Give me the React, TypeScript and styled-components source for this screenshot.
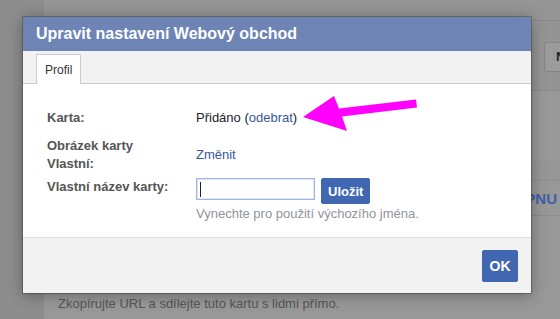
import React from "react";
import styled, { createGlobalStyle } from "styled-components";

const GlobalStyle = createGlobalStyle`
  html, body {
    margin: 0;
    padding: 0;
    width: 560px;
    height: 319px;
    overflow: hidden;
    font-family: "Liberation Sans", Arial, sans-serif;
  }
`;

/* page behind the dialog (already dimmed) */
const Page = styled.div`
  position: relative;
  display: flex;
  width: 560px;
  height: 319px;
  overflow: hidden;
  background: #999999;
`;

const Sidebar = styled.div`
  width: 44px;
  flex-shrink: 0;
  background: #8d8d8d;
`;

const Main = styled.div`
  flex: 1;
  min-width: 0;
  display: flex;
  flex-direction: column;
  overflow: hidden;
  background: #989898;
`;

const TopStrip = styled.div`
  height: 20px;
  background: #959595;
  border-bottom: 1px solid #888888;
`;

const Toolbar = styled.div`
  display: flex;
  height: 69px;
  padding-left: 500px;
  align-items: center;
  overflow: hidden;
  background: #949494;
  border-bottom: 1px solid #8a8a8a;
`;

const GhostButton = styled.div`
  flex-shrink: 0;
  width: 60px;
  height: 28px;
  margin-top: 2px;
  border: 1px solid #858585;
  border-radius: 3px;
  background: #9b9b9b;
  color: #222;
  font-size: 13px;
  font-weight: bold;
  line-height: 28px;
  padding-left: 11px;
`;

const Section = styled.div`
  height: 89px;
  border-bottom: 1px solid #8d8d8d;
  background: linear-gradient(#999999 0 70px, #969696 70px);
`;

const SectionTitle = styled.div`
  display: flex;
  justify-content: flex-end;
  height: 34px;
  align-items: center;
  padding-right: 3px;
  color: #3f60a8;
  font-size: 15px;
  font-weight: bold;
  white-space: nowrap;
  border-bottom: 1px solid #8d8d8d;
`;

const Filler = styled.div`
  flex: 1;
`;

const PageNote = styled.div`
  padding: 0 0 8px 14px;
  color: #555;
  font-size: 13px;
  white-space: nowrap;
`;

/* dialog */
const Dialog = styled.div`
  position: absolute;
  left: 23px;
  top: 17px;
  width: 508px;
  display: flex;
  flex-direction: column;
  background: #fff;
  box-shadow: 0 2px 14px rgba(0, 0, 0, 0.35), 0 0 0 1px rgba(70, 70, 70, 0.45);
`;

const Header = styled.div`
  height: 34px;
  background: #6d84b4;
  color: #fff;
  font-size: 16px;
  font-weight: bold;
  line-height: 34px;
  padding-left: 13px;
`;

const TabStrip = styled.div`
  display: flex;
  align-items: flex-end;
  height: 33px;
  padding-left: 13px;
  background: #f2f2f2;
  border-bottom: 1px solid #cccccc;
  box-sizing: border-box;
`;

const Tab = styled.div`
  height: 30px;
  margin-bottom: -1px;
  padding: 0 8px;
  background: #fff;
  border: 1px solid #cccccc;
  border-bottom: none;
  color: #333;
  font-size: 12px;
  line-height: 30px;
  box-sizing: border-box;
`;

const Body = styled.div`
  padding: 25px 24px 15px;
`;

const Row = styled.div<{ $after: number }>`
  display: grid;
  grid-template-columns: 149px 1fr;
  align-items: start;
  padding-bottom: ${(p) => p.$after}px;
`;

const Label = styled.div`
  color: #555;
  font-size: 13px;
  font-weight: bold;
  line-height: 18px;
`;

const Value = styled.div<{ $center?: boolean }>`
  align-self: ${(p) => (p.$center ? "center" : "start")};
  color: #1d2129;
  font-size: 13px;
  line-height: 18px;
`;

const Link = styled.a`
  color: #365899;
  text-decoration: none;
  cursor: pointer;
`;

const FieldColumn = styled.div`
  display: flex;
  flex-direction: column;
`;

const InputLine = styled.div`
  display: flex;
  align-items: flex-start;
  gap: 6px;
`;

const InputWrap = styled.div`
  position: relative;
  display: flex;
`;

const TextInput = styled.input`
  width: 119px;
  height: 22px;
  box-sizing: border-box;
  margin: 0;
  padding: 0 4px;
  border: 1px solid #9db4e4;
  outline: none;
  font-family: inherit;
  font-size: 13px;
  caret-color: transparent;
  box-shadow: inset 0 0 0 1px rgba(157, 180, 228, 0.35);
`;

const Caret = styled.span`
  position: absolute;
  left: 4px;
  top: 4px;
  width: 1px;
  height: 15px;
  background: #222;
  pointer-events: none;
`;

const SaveButton = styled.button`
  height: 26px;
  padding: 0 6px;
  margin: 0;
  border: 1px solid #4267b2;
  border-radius: 2px;
  background: #4267b2;
  color: #fff;
  font-family: inherit;
  font-size: 13px;
  font-weight: bold;
  cursor: pointer;
`;

const Hint = styled.div`
  margin-top: 2px;
  color: #90949c;
  font-size: 13px;
  line-height: 16px;
`;

const Footer = styled.div`
  display: flex;
  justify-content: flex-end;
  align-items: center;
  height: 56px;
  padding-right: 13px;
  background: #f2f2f2;
  border-top: 1px solid #dddfe2;
  box-sizing: border-box;
`;

const OkButton = styled.button`
  width: 36px;
  height: 32px;
  margin: 0;
  padding: 0;
  border: 1px solid #4267b2;
  border-radius: 2px;
  background: #4267b2;
  color: #fff;
  font-family: inherit;
  font-size: 14px;
  font-weight: bold;
  cursor: pointer;
`;

const ArrowSvg = styled.svg`
  position: absolute;
  left: 295px;
  top: 90px;
`;

function Arrow(): JSX.Element {
  return (
    <ArrowSvg width="130" height="45" viewBox="295 90 130 45">
      <polygon
        fill="#ff00ff"
        points="303,117 334,96 339,108.5 416,99.5 417,107.5 342,116.5 347,131"
      />
    </ArrowSvg>
  );
}

export default function App(): JSX.Element {
  return (
    <>
      <GlobalStyle />
      <Page>
        <Sidebar />
        <Main>
          <TopStrip />
          <Toolbar>
            <GhostButton>Nastavení</GhostButton>
          </Toolbar>
          <Section />
          <SectionTitle>ODEPNU</SectionTitle>
          <Filler />
          <PageNote>Zkopírujte URL a sdílejte tuto kartu s lidmi přímo.</PageNote>
        </Main>

        <Dialog>
          <Header>Upravit nastavení Webový obchod</Header>
          <TabStrip>
            <Tab>Profil</Tab>
          </TabStrip>
          <Body>
            <Row $after={10}>
              <Label>Karta:</Label>
              <Value>
                Přidáno (<Link>odebrat</Link>)
              </Value>
            </Row>
            <Row $after={5}>
              <Label>
                Obrázek karty
                <br />
                Vlastní:
              </Label>
              <Value $center>
                <Link>Změnit</Link>
              </Value>
            </Row>
            <Row $after={0}>
              <Label>Vlastní název karty:</Label>
              <FieldColumn>
                <InputLine>
                  <InputWrap>
                    <TextInput type="text" />
                    <Caret />
                  </InputWrap>
                  <SaveButton>Uložit</SaveButton>
                </InputLine>
                <Hint>Vynechte pro použití výchozího jména.</Hint>
              </FieldColumn>
            </Row>
          </Body>
          <Footer>
            <OkButton>OK</OkButton>
          </Footer>
        </Dialog>

        <Arrow />
      </Page>
    </>
  );
}
